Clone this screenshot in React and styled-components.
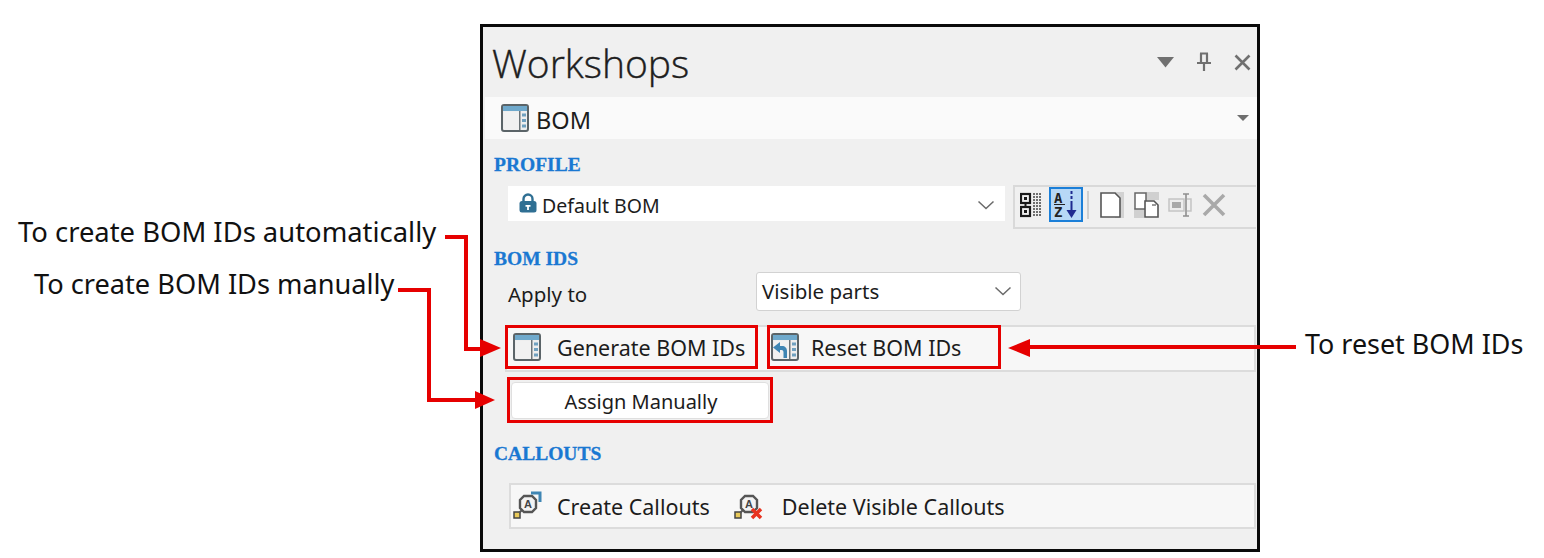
import styled, { createGlobalStyle } from 'styled-components'

const GlobalStyle = createGlobalStyle`
  html, body {
    margin: 0;
    background: #fff;
    overflow: hidden;
  }
`

const Stage = styled.div`
  position: relative;
  width: 1544px;
  height: 558px;
  padding: 24px 0 0 480px;
  box-sizing: border-box;
  font-family: 'Noto Sans', sans-serif;
  color: #1c1c1c;
`

const Panel = styled.div`
  width: 780px;
  height: 528px;
  box-sizing: border-box;
  border: 3px solid #0a0a0a;
  background: #f0f0f0;
  display: flex;
  flex-direction: column;
`

const Header = styled.div`
  height: 70px;
  display: flex;
  align-items: center;
  justify-content: space-between;
  padding: 0 6px 0 9px;
`

const Title = styled.h1`
  margin: 0;
  font-family: 'Open Sans', sans-serif;
  font-weight: 300;
  font-size: 39px;
  line-height: 1;
  color: #1e1e1e;
  -webkit-text-stroke: 0.4px #1e1e1e;
`

const WindowButtons = styled.div`
  display: flex;
  align-items: center;
  gap: 22px;
`

const ViewBar = styled.div`
  height: 42px;
  margin-left: 2px;
  padding: 0 8px 0 16px;
  background: #fafafa;
  display: flex;
  align-items: center;
  gap: 7px;
  font-size: 23.5px;
`

const ViewName = styled.span`
  padding-top: 3px;
`

const ViewCaret = styled.div`
  margin-left: auto;
  width: 0;
  height: 0;
  border-left: 6px solid transparent;
  border-right: 6px solid transparent;
  border-top: 6px solid #6e6e6e;
`

const SectionTitle = styled.h2`
  margin: ${(p) => p.$top}px 0 0 11px;
  font-family: 'Liberation Serif', serif;
  font-weight: 700;
  font-size: 19.5px;
  line-height: 20px;
  color: #1a78d2;
  -webkit-text-stroke: 0.3px #1a78d2;
`

const ProfileRow = styled.div`
  display: flex;
  align-items: flex-start;
  margin: 11px 0 0 25px;
`

const ProfileSelect = styled.div`
  width: 497px;
  height: 35px;
  box-sizing: border-box;
  padding: 3px 10px 0 11px;
  background: #fff;
  display: flex;
  align-items: center;
  gap: 5px;
  font-size: 19.5px;
`

const ChevronSlot = styled.span`
  margin-left: auto;
  display: flex;
`

const Toolbar = styled.div`
  width: 243px;
  height: 44px;
  margin: -1px 0 0 8px;
  box-sizing: border-box;
  border: 2px solid #d9d9d9;
  border-right: none;
  display: flex;
  align-items: flex-start;
`

const ToolButton = styled.div`
  width: 34px;
  height: 35px;
  box-sizing: border-box;
  display: flex;
  align-items: center;
  justify-content: center;
  background: ${(p) => (p.$active ? '#b7d8f6' : 'transparent')};
  border: ${(p) => (p.$active ? '2px solid #1b7fd8' : 'none')};
`

const ToolSeparator = styled.div`
  width: 2px;
  height: 28px;
  margin: 4px 6px 0 4px;
  background: #cfcfcf;
`

const ApplyRow = styled.div`
  display: flex;
  align-items: center;
  margin: 3px 0 0 25px;
  font-size: 20.5px;
`

const ApplyLabel = styled.span`
  width: 248px;
  padding-top: 5px;
`

const ApplySelect = styled.div`
  width: 265px;
  height: 39px;
  box-sizing: border-box;
  padding: 0 8px 2px 5px;
  background: #fff;
  border: 1px solid #d2d2d2;
  border-radius: 3px;
  display: flex;
  align-items: center;
  justify-content: space-between;
`

const ButtonStrip = styled.div`
  height: ${(p) => p.$h}px;
  margin: ${(p) => p.$top}px 1px 0 ${(p) => p.$left}px;
  box-sizing: border-box;
  background: #f7f7f7;
  border: 2px solid #dcdcdc;
  display: flex;
  align-items: ${(p) => p.$align || 'center'};
  font-size: 21.5px;
`

const Marked = styled.div`
  height: 44px;
  width: ${(p) => p.$w}px;
  margin: -2px 0 0 ${(p) => p.$left}px;
  box-sizing: border-box;
  border: 3px solid #e60000;
  padding-left: ${(p) => p.$pad}px;
  background: #f7f7f7;
  display: flex;
  align-items: center;
  gap: ${(p) => p.$gap}px;
  flex: none;
`

const AssignFrame = styled.div`
  width: 266px;
  height: 46px;
  margin: 5px 0 0 24px;
  box-sizing: border-box;
  border: 3px solid #e60000;
  padding: 2px 1px 1px 1px;
  display: flex;
`

const AssignButton = styled.div`
  flex: 1;
  background: #fff;
  border: 1px solid #dfdfdf;
  border-radius: 4px;
  display: flex;
  align-items: center;
  justify-content: center;
  font-size: 20px;
  padding: 2px 0 0 2px;
`

const CalloutAction = styled.div`
  display: flex;
  align-items: center;
  gap: ${(p) => p.$gap}px;
  margin-left: ${(p) => p.$left}px;
`

const Note = styled.div`
  position: absolute;
  left: ${(p) => p.$x}px;
  top: ${(p) => p.$y}px;
  font-family: 'Noto Sans', sans-serif;
  font-size: ${(p) => p.$size}px;
  line-height: 34px;
  color: #111;
  white-space: nowrap;
`

const ArrowLayer = styled.svg`
  position: absolute;
  left: 0;
  top: 0;
  pointer-events: none;
`

const IconSvg = styled.svg`
  flex: none;
`

const LockSvg = styled.svg`
  flex: none;
  margin-top: -5px;
`

const Chevron = () => (
  <svg width="18" height="10" viewBox="0 0 18 10">
    <path d="M1.5 1.5 9 8.5l7.5-7" fill="none" stroke="#6a6a6a" strokeWidth="1.5" />
  </svg>
)

const TableIcon = ({ undo }) => (
  <IconSvg width="28" height="28" viewBox="0 0 28 28">
    <rect x="1" y="1" width="26" height="26" rx="2" fill="#eee" stroke="#5b6468" strokeWidth="2" />
    <rect x="2" y="2" width="24" height="5" fill="#6fa9cc" />
    <rect x="3" y="8" width="15" height="18" fill="#f1f1f1" />
    <rect x="18" y="7" width="1.5" height="19" fill="#6c7478" />
    <rect x="21" y="9.5" width="4" height="3" fill="#6fa0bf" />
    <rect x="21" y="15" width="4" height="3" fill="#6fa0bf" />
    <rect x="21" y="20.5" width="4" height="3" fill="#6fa0bf" />
    {undo && (
      <path
        d="M16 25v-7c0-3-2-5-5-5H9V9L2 14.500 9 20v-3h1.500c1.500 0 2 1 2 2.500V25z"
        fill="#3f86b4"
      />
    )}
  </IconSvg>
)

const CalloutBase = () => (
  <>
    <rect x="1" y="21" width="6" height="6" fill="#e8c95a" stroke="#444" strokeWidth="1.500" />
    <path d="M6 22l4-4" stroke="#555" strokeWidth="2" />
    <path d="M11 5h8l4 4v8l-4 4h-8l-4-4V9z" fill="#f3f3f3" stroke="#555" strokeWidth="2.400" />
    <text
      x="15"
      y="17"
      textAnchor="middle"
      fontSize="11"
      fontWeight="700"
      fontFamily="Liberation Sans, sans-serif"
      fill="#444"
    >
      A
    </text>
  </>
)

const CreateCalloutIcon = () => (
  <IconSvg width="30" height="30" viewBox="0 0 30 30">
    <CalloutBase />
    <path d="M18 2h9v9" fill="none" stroke="#3f86b4" strokeWidth="3" />
  </IconSvg>
)

const DeleteCalloutIcon = () => (
  <IconSvg width="30" height="30" viewBox="0 0 30 30">
    <CalloutBase />
    <path d="M18 18l9 9m0-9-9 9" fill="none" stroke="#e8331f" strokeWidth="3.500" />
  </IconSvg>
)

const LockIcon = () => (
  <LockSvg width="18" height="20" viewBox="0 0 18 20">
    <path d="M4.500 9V6a4.500 4.500 0 0 1 9 0v3" fill="none" stroke="#2f6f93" strokeWidth="2.400" />
    <rect x="0.500" y="8" width="17" height="11.500" rx="2.500" fill="#2f6f93" />
    <path d="M6.500 12h5v1.800h-1.600V17H8.100v-3.200H6.500z" fill="#fff" />
  </LockSvg>
)

const TreeIcon = () => (
  <svg width="24" height="26" viewBox="0 0 24 26">
    <g fill="none" stroke="#1a1a1a" strokeWidth="2.200">
      <rect x="1" y="2" width="9" height="9" />
      <rect x="1" y="15" width="9" height="9" />
    </g>
    <rect x="4" y="5" width="3" height="3" fill="#1a1a1a" />
    <rect x="4" y="18" width="3" height="3" fill="#1a1a1a" />
    <path d="M5.500 11v4" stroke="#1a1a1a" strokeWidth="2" />
    <path
      d="M13 2h9M13 5h9M13 8h9M13 11h9M13 14h9M13 17h9M13 20h9M13 23h9"
      stroke="#444"
      strokeWidth="1.400"
      strokeDasharray="2 1"
    />
  </svg>
)

const SortIcon = () => (
  <svg width="26" height="30" viewBox="0 0 26 30">
    <g fontFamily="DejaVu Sans Mono, monospace" fontWeight="700" fontSize="14" fill="#222">
      <text x="1" y="13">A</text>
      <text x="1" y="27">Z</text>
    </g>
    <path d="M1 14.500h11" stroke="#222" strokeWidth="1" />
    <path d="M18.500 1v3M18.500 6v3M18.500 11v12" stroke="#1f2a90" strokeWidth="2" />
    <path d="M13.500 20h10l-5 8z" fill="#1f2a90" />
  </svg>
)

const PageIcon = () => (
  <svg width="24" height="26" viewBox="0 0 24 26">
    <rect x="15" y="0" width="9" height="26" fill="#d2d2d2" />
    <path d="M1 1h14l5 5v19H1z" fill="#fff" stroke="#555" strokeWidth="1.600" />
  </svg>
)

const CopyIcon = () => (
  <svg width="25" height="26" viewBox="0 0 25 26">
    <path d="M12 0h13v8H12zM0 16h10v10H0z" fill="#d0d0d0" />
    <path d="M1 1h11v16H1z" fill="#fff" stroke="#666" strokeWidth="1.500" />
    <path d="M11 9h9l4 4v12H11z" fill="#fff" stroke="#555" strokeWidth="1.600" />
    <path d="M18 13h4" stroke="#777" strokeWidth="1.500" />
  </svg>
)

const RenameIcon = () => (
  <svg width="24" height="26" viewBox="0 0 24 26">
    <rect x="1" y="7" width="15" height="12" fill="#ededed" stroke="#c4c4c4" strokeWidth="1.500" />
    <rect x="4" y="10" width="9" height="6" fill="#a9a9a9" />
    <path d="M19 7h4v12h-4" fill="#efefef" stroke="#c4c4c4" strokeWidth="1.500" />
    <path d="M15 2h6M15 24h6M18 2v22" fill="none" stroke="#8f8f8f" strokeWidth="1.600" />
  </svg>
)

const DeleteIcon = () => (
  <svg width="24" height="24" viewBox="0 0 24 24">
    <path d="M2 2l20 20M22 2 2 22" stroke="#a9a9a9" strokeWidth="3.600" />
  </svg>
)

const App = () => {
  return (
    <Stage>
      <GlobalStyle />
      <Panel>
        <Header>
          <Title>Workshops</Title>
          <WindowButtons>
            <svg width="17" height="11" viewBox="0 0 17 11">
              <path d="M0 0h17l-8.500 10.500z" fill="#707070" />
            </svg>
            <svg width="16" height="20" viewBox="0 0 16 20">
              <path
                d="M4 1.500h8M5 1.500v9M11 1.500v9M1 11h14M8 11v8"
                fill="none"
                stroke="#707070"
                strokeWidth="2.200"
              />
            </svg>
            <svg width="17" height="17" viewBox="0 0 17 17">
              <path d="M1.500 1.500l14 14m0-14-14 14" stroke="#707070" strokeWidth="2.600" />
            </svg>
          </WindowButtons>
        </Header>

        <ViewBar>
          <TableIcon />
          <ViewName>BOM</ViewName>
          <ViewCaret />
        </ViewBar>

        <SectionTitle $top={16}>PROFILE</SectionTitle>
        <ProfileRow>
          <ProfileSelect>
            <LockIcon />
            <span>Default BOM</span>
            <ChevronSlot>
              <Chevron />
            </ChevronSlot>
          </ProfileSelect>
          <Toolbar>
            <ToolButton>
              <TreeIcon />
            </ToolButton>
            <ToolButton $active>
              <SortIcon />
            </ToolButton>
            <ToolSeparator />
            <ToolButton>
              <PageIcon />
            </ToolButton>
            <ToolButton>
              <CopyIcon />
            </ToolButton>
            <ToolButton>
              <RenameIcon />
            </ToolButton>
            <ToolButton>
              <DeleteIcon />
            </ToolButton>
          </Toolbar>
        </ProfileRow>

        <SectionTitle $top={20}>BOM IDS</SectionTitle>
        <ApplyRow>
          <ApplyLabel>Apply to</ApplyLabel>
          <ApplySelect>
            <span>Visible parts</span>
            <Chevron />
          </ApplySelect>
        </ApplyRow>

        <ButtonStrip $h={47} $top={14} $left={22} $align="flex-start">
          <Marked $w={253} $left={-2} $pad={5} $gap={16}>
            <TableIcon />
            <span>Generate BOM IDs</span>
          </Marked>
          <Marked $w={234} $left={9} $pad={1} $gap={12}>
            <TableIcon undo />
            <span>Reset BOM IDs</span>
          </Marked>
        </ButtonStrip>

        <AssignFrame>
          <AssignButton>Assign Manually</AssignButton>
        </AssignFrame>

        <SectionTitle $top={21}>CALLOUTS</SectionTitle>
        <ButtonStrip $h={46} $top={19} $left={26}>
          <CalloutAction $gap={14} $left={2}>
            <CreateCalloutIcon />
            <span>Create Callouts</span>
          </CalloutAction>
          <CalloutAction $gap={18} $left={24}>
            <DeleteCalloutIcon />
            <span>Delete Visible Callouts</span>
          </CalloutAction>
        </ButtonStrip>
      </Panel>

      <Note $x={18} $y={215} $size={27.4}>To create BOM IDs automatically</Note>
      <Note $x={34} $y={267} $size={27.2}>To create BOM IDs manually</Note>
      <Note $x={1305} $y={327} $size={26.9}>To reset BOM IDs</Note>

      <ArrowLayer width="1544" height="558" viewBox="0 0 1544 558">
        <g fill="none" stroke="#e60000" strokeWidth="4">
          <path d="M445 237h21v112h16" />
          <path d="M398 290h31v110h47" />
          <path d="M1296 347h-268" />
        </g>
        <g fill="#e60000">
          <path d="M501 348l-21-9v18z" />
          <path d="M495 400l-20-9v18z" />
          <path d="M1008 348l22-9v18z" />
        </g>
      </ArrowLayer>
    </Stage>
  )
}

export default App
